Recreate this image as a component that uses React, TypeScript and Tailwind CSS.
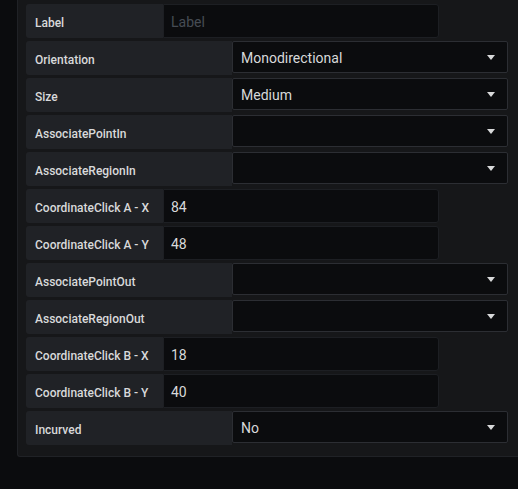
import React from 'react'

type Row =
    | { kind: 'input'; label: string; value?: string; placeholder?: string }
    | { kind: 'select'; label: string; value?: string }

const rows: Row[] = [
    { kind: 'input', label: 'Label', placeholder: 'Label' },
    { kind: 'select', label: 'Orientation', value: 'Monodirectional' },
    { kind: 'select', label: 'Size', value: 'Medium' },
    { kind: 'select', label: 'AssociatePointIn' },
    { kind: 'select', label: 'AssociateRegionIn' },
    { kind: 'input', label: 'CoordinateClick A - X', value: '84' },
    { kind: 'input', label: 'CoordinateClick A - Y', value: '48' },
    { kind: 'select', label: 'AssociatePointOut' },
    { kind: 'select', label: 'AssociateRegionOut' },
    { kind: 'input', label: 'CoordinateClick B - X', value: '18' },
    { kind: 'input', label: 'CoordinateClick B - Y', value: '40' },
    { kind: 'select', label: 'Incurved', value: 'No' },
]

function Caret() {
    return (
        <svg width="8" height="5" viewBox="0 0 8 5" className="shrink-0">
            <path d="M0 0 H8 L4 5 Z" fill="#d8d9da" />
        </svg>
    )
}

function FormRow({ row }: { row: Row }) {
    const isSelect = row.kind === 'select'
    return (
        <div className="flex items-start h-[34px]">
            <div
                className={
                    isSelect
                        ? 'w-[206px] h-[34px] shrink-0 flex items-center bg-[#202226] rounded-l-[3px] pl-[9px] pt-[4px] text-[12px] font-medium text-[#d8d9da]'
                        : 'w-[137px] h-[34px] shrink-0 flex items-center bg-[#202226] rounded-l-[3px] pl-[9px] pt-[4px] text-[12px] font-medium text-[#d8d9da]'
                }
            >
                {row.label}
            </div>
            {isSelect ? (
                <div className="w-[276px] h-[32px] flex items-center justify-between bg-[#0b0c0e] border border-[#2c2e33] rounded-[2px] pl-[8px] pr-[12px] text-[14px] text-[#d8d9da]">
                    <span className="pt-[2px]">{row.value}</span>
                    <Caret />
                </div>
            ) : (
                <div className="w-[276px] h-[34px] flex items-center bg-[#0b0c0e] border border-[#1d1f23] rounded-r-[3px] pl-[7px] pt-[2px] text-[14px]">
                    {row.value ? (
                        <span className="text-[#d8d9da]">{row.value}</span>
                    ) : (
                        <span className="text-[#464c54]">{row.placeholder}</span>
                    )}
                </div>
            )}
        </div>
    )
}

export default function App() {
    return (
        <div className="w-[518px] h-[489px] overflow-hidden bg-[#0b0c0e] pl-[17px] font-['Roboto',sans-serif]">
            <div className="h-[457px] bg-[#161719] border-l border-b border-[#202226] rounded-bl-[3px] pl-[8px] pt-[4px] flex flex-col gap-[3px]">
                {rows.map((row) => (
                    <FormRow key={row.label} row={row} />
                ))}
            </div>
        </div>
    )
}
